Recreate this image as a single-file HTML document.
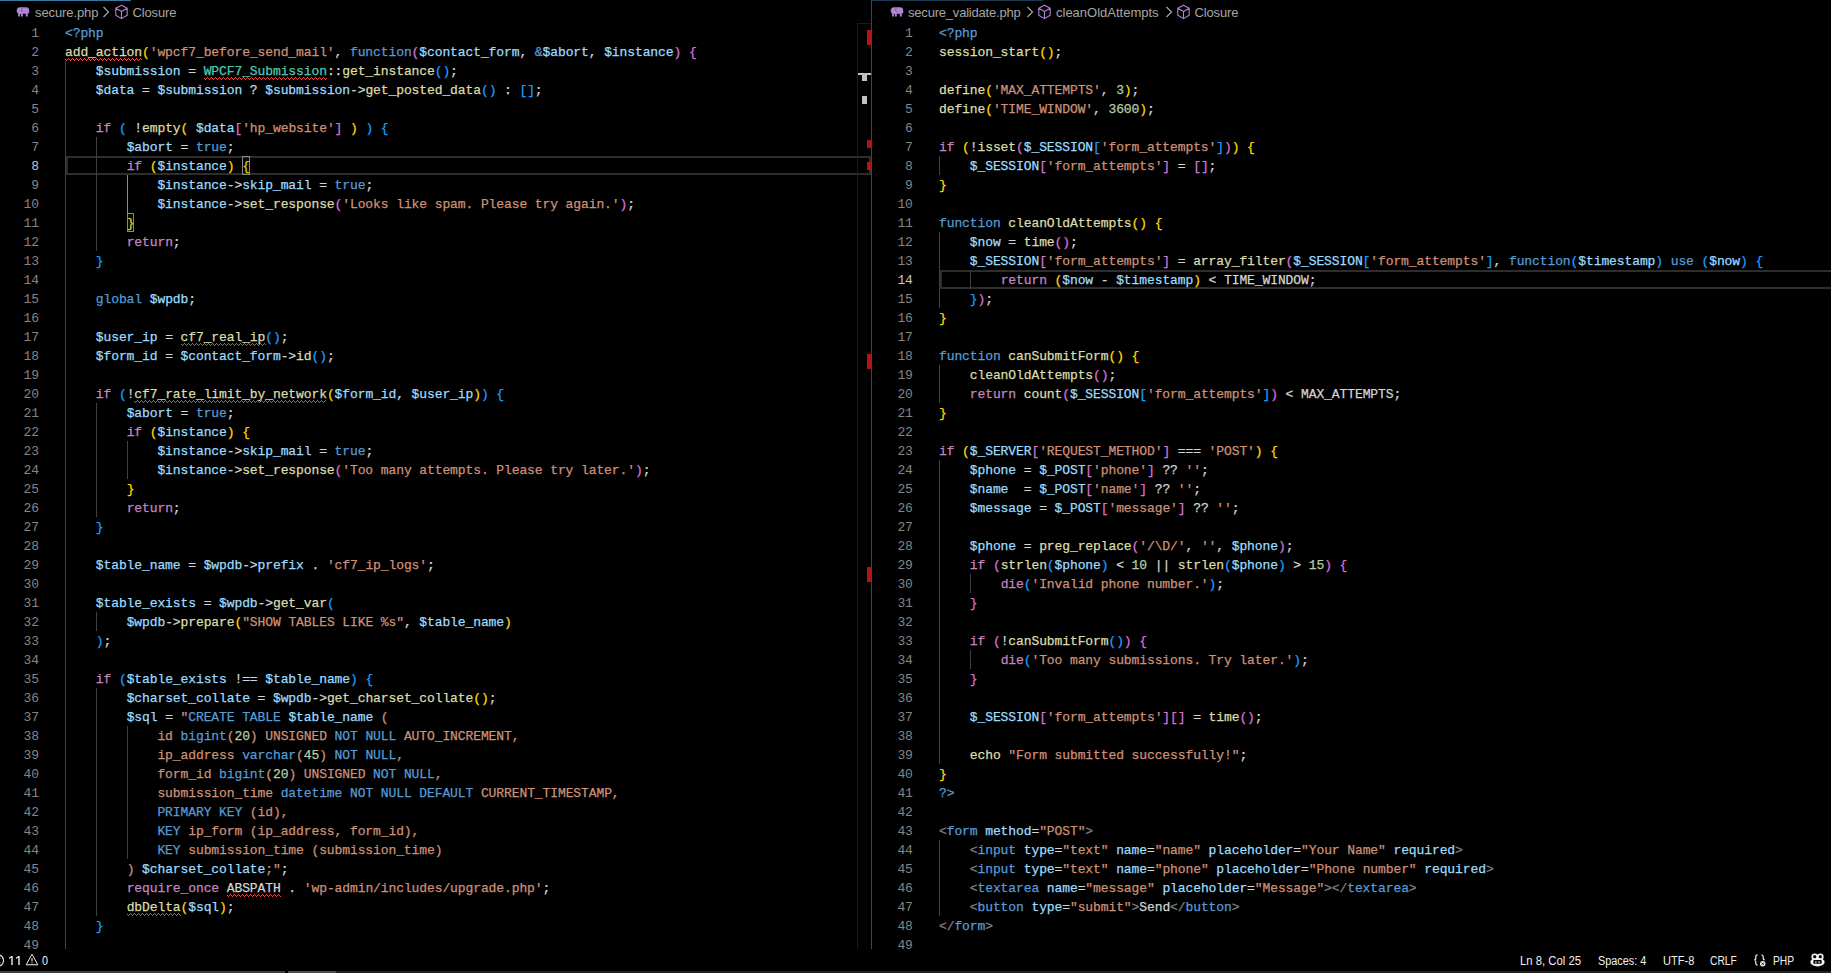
<!DOCTYPE html>
<html><head><meta charset="utf-8"><title>secure.php</title>
<style>
*{box-sizing:border-box;margin:0;padding:0}
html,body{width:1831px;height:973px;overflow:hidden;background:#000}
body{position:relative;font-family:"Liberation Sans",sans-serif}
.pane{position:absolute;top:0;height:949px;overflow:hidden;background:#000}
#pl{left:0;width:871px}
#pr{left:872px;width:959px}
#div{position:absolute;left:871px;top:0;width:1px;height:949px;background:#444}
.tabline{position:absolute;top:0;left:0;height:1px;background:#347ba4}
.bc{position:absolute;top:0;left:0;height:23px;font-size:13px;color:#a6a6a6;white-space:nowrap}
.bc span{position:absolute;top:5px;line-height:16px}
.bc svg{position:absolute}
.ln{position:absolute;left:0;height:19px;line-height:19px;text-align:right;font-family:"Liberation Mono",monospace;font-size:13px;letter-spacing:-0.1px;color:#858585;padding-top:1px}
.ln.la{color:#c6c6c6}
.code{position:absolute;height:19px;line-height:19px;white-space:pre;font-family:"Liberation Mono",monospace;font-size:13px;letter-spacing:-0.1px;color:#d4d4d4;padding-top:1px;-webkit-text-stroke:0.25px}
.code span{display:inline-block;height:19px;line-height:19px;vertical-align:top;position:relative}
.b{color:#569cd6}.y{color:#dcdcaa}.s{color:#ce9178}.v{color:#9cdcfe}.p{color:#c586c0}
.t{color:#4ec9b0}.n{color:#b5cea8}.w{color:#d4d4d4}.g{color:#808080}.r{color:#ce9178}
.k1{color:#ffd700}.k2{color:#da70d6}.k3{color:#179fff}
.sqs{position:absolute;left:0;bottom:1px}
.bm::after{content:"";box-sizing:border-box;position:absolute;left:0;top:-1px;width:100%;height:19px;border:1px solid #888;background:rgba(0,100,0,0.1)}
.cl{position:absolute;height:19px;border:2px solid #2d2d2d}
.ig{position:absolute;width:1px;background:#404040}
.ig.act{background:#8a8a8a}
#ruler{position:absolute;left:857px;top:23px;width:14px;height:926px;border-left:1px solid #1c1c1c;border-top:1px solid #1c1c1c}
.rm{position:absolute;background:#b31616;left:867px;width:4px}
.gm{position:absolute;background:#c0c0c0;left:862px;width:5px}
#status{position:absolute;left:0;top:950px;width:1831px;height:21px;font-size:12px;color:#f0f0f0;white-space:nowrap}
#status span{position:absolute;top:3px;line-height:16px;transform-origin:0 50%}
#status svg{position:absolute}
</style></head><body>
<div class="pane" id="pl">
<div class="tabline" style="width:131px"></div>
<div class="bc">
<svg style="left:16px;top:6px" width="14" height="11" viewBox="0 0 14 11"><path d="M3.800 1.300 H10.200 C12 1.300 13.200 2.500 13.200 4.300 V7.300 H11.800 V10.500 H9.800 V7.800 H6.800 V10.500 H4.900 V8 H3.900 V10.500 H2.100 V7.600 C1.200 7 .700 6 .700 4.600 C.700 2.600 2 1.300 3.800 1.300 Z" fill="#b084d8"/><path d="M6.100 2.200 Q4.700 4.300 6.700 6" fill="none" stroke="#6b4a96" stroke-width=".8"/></svg>
<span style="left:35px;letter-spacing:-0.1px">secure.php</span>
<svg style="left:102px;top:6px" width="8" height="12" viewBox="0 0 8 12"><path d="M1.500 1 L6.500 6 L1.500 11" fill="none" stroke="#a6a6a6" stroke-width="1.200"/></svg>
<svg style="left:114px;top:4px" width="15" height="16" viewBox="0 0 15 16"><path d="M7.500 1.200 L13.200 4.300 V11.200 L7.500 14.600 L1.800 11.200 V4.300 Z M1.800 4.300 L7.500 7.600 L13.200 4.300 M7.500 7.600 V14.600" fill="none" stroke="#b180d7" stroke-width="1.100" stroke-linejoin="round"/></svg>
<span style="left:132.500px;letter-spacing:-0.15px">Closure</span>
</div>
<div class="cl" style="left:66px;top:156px;width:805px"></div>
<div class="ig" style="left:65px;top:61px;height:893px"></div>
<div class="ig" style="left:96px;top:137px;height:114px"></div>
<div class="ig" style="left:96px;top:403px;height:114px"></div>
<div class="ig" style="left:96px;top:612px;height:19px"></div>
<div class="ig" style="left:96px;top:688px;height:228px"></div>
<div class="ig" style="left:127px;top:441px;height:38px"></div>
<div class="ig" style="left:127px;top:726px;height:133px"></div>
<div class="ig act" style="left:127px;top:175px;height:38px"></div>
<div class="ln" style="top:23px;width:39px">1</div>
<div class="code" style="top:23px;left:65px"><span class="b">&lt;?php</span></div>
<div class="ln" style="top:42px;width:39px">2</div>
<div class="code" style="top:42px;left:65px"><span class="y sq">add_action<svg class="sqs" width="77" height="3" viewBox="0 0 77 3" shape-rendering="crispEdges"><path d="M0 1h1v1h-1zM1 2h1v1h-1zM2 1h1v1h-1zM3 0h1v1h-1zM4 1h1v1h-1zM5 2h1v1h-1zM6 1h1v1h-1zM7 0h1v1h-1zM8 1h1v1h-1zM9 2h1v1h-1zM10 1h1v1h-1zM11 0h1v1h-1zM12 1h1v1h-1zM13 2h1v1h-1zM14 1h1v1h-1zM15 0h1v1h-1zM16 1h1v1h-1zM17 2h1v1h-1zM18 1h1v1h-1zM19 0h1v1h-1zM20 1h1v1h-1zM21 2h1v1h-1zM22 1h1v1h-1zM23 0h1v1h-1zM24 1h1v1h-1zM25 2h1v1h-1zM26 1h1v1h-1zM27 0h1v1h-1zM28 1h1v1h-1zM29 2h1v1h-1zM30 1h1v1h-1zM31 0h1v1h-1zM32 1h1v1h-1zM33 2h1v1h-1zM34 1h1v1h-1zM35 0h1v1h-1zM36 1h1v1h-1zM37 2h1v1h-1zM38 1h1v1h-1zM39 0h1v1h-1zM40 1h1v1h-1zM41 2h1v1h-1zM42 1h1v1h-1zM43 0h1v1h-1zM44 1h1v1h-1zM45 2h1v1h-1zM46 1h1v1h-1zM47 0h1v1h-1zM48 1h1v1h-1zM49 2h1v1h-1zM50 1h1v1h-1zM51 0h1v1h-1zM52 1h1v1h-1zM53 2h1v1h-1zM54 1h1v1h-1zM55 0h1v1h-1zM56 1h1v1h-1zM57 2h1v1h-1zM58 1h1v1h-1zM59 0h1v1h-1zM60 1h1v1h-1zM61 2h1v1h-1zM62 1h1v1h-1zM63 0h1v1h-1zM64 1h1v1h-1zM65 2h1v1h-1zM66 1h1v1h-1zM67 0h1v1h-1zM68 1h1v1h-1zM69 2h1v1h-1zM70 1h1v1h-1zM71 0h1v1h-1zM72 1h1v1h-1zM73 2h1v1h-1zM74 1h1v1h-1zM75 0h1v1h-1zM76 1h1v1h-1z" fill="#e64c4c"/></svg></span><span class="k1">(</span><span class="s">'wpcf7_before_send_mail'</span>, <span class="b">function</span><span class="k2">(</span><span class="v">$contact_form</span>, <span class="b">&amp;</span><span class="v">$abort</span>, <span class="v">$instance</span><span class="k2">)</span> <span class="k2">{</span></div>
<div class="ln" style="top:61px;width:39px">3</div>
<div class="code" style="top:61px;left:65px">    <span class="v">$submission</span> = <span class="t sq">WPCF7_Submission<svg class="sqs" width="123" height="3" viewBox="0 0 123 3" shape-rendering="crispEdges"><path d="M0 1h1v1h-1zM1 2h1v1h-1zM2 1h1v1h-1zM3 0h1v1h-1zM4 1h1v1h-1zM5 2h1v1h-1zM6 1h1v1h-1zM7 0h1v1h-1zM8 1h1v1h-1zM9 2h1v1h-1zM10 1h1v1h-1zM11 0h1v1h-1zM12 1h1v1h-1zM13 2h1v1h-1zM14 1h1v1h-1zM15 0h1v1h-1zM16 1h1v1h-1zM17 2h1v1h-1zM18 1h1v1h-1zM19 0h1v1h-1zM20 1h1v1h-1zM21 2h1v1h-1zM22 1h1v1h-1zM23 0h1v1h-1zM24 1h1v1h-1zM25 2h1v1h-1zM26 1h1v1h-1zM27 0h1v1h-1zM28 1h1v1h-1zM29 2h1v1h-1zM30 1h1v1h-1zM31 0h1v1h-1zM32 1h1v1h-1zM33 2h1v1h-1zM34 1h1v1h-1zM35 0h1v1h-1zM36 1h1v1h-1zM37 2h1v1h-1zM38 1h1v1h-1zM39 0h1v1h-1zM40 1h1v1h-1zM41 2h1v1h-1zM42 1h1v1h-1zM43 0h1v1h-1zM44 1h1v1h-1zM45 2h1v1h-1zM46 1h1v1h-1zM47 0h1v1h-1zM48 1h1v1h-1zM49 2h1v1h-1zM50 1h1v1h-1zM51 0h1v1h-1zM52 1h1v1h-1zM53 2h1v1h-1zM54 1h1v1h-1zM55 0h1v1h-1zM56 1h1v1h-1zM57 2h1v1h-1zM58 1h1v1h-1zM59 0h1v1h-1zM60 1h1v1h-1zM61 2h1v1h-1zM62 1h1v1h-1zM63 0h1v1h-1zM64 1h1v1h-1zM65 2h1v1h-1zM66 1h1v1h-1zM67 0h1v1h-1zM68 1h1v1h-1zM69 2h1v1h-1zM70 1h1v1h-1zM71 0h1v1h-1zM72 1h1v1h-1zM73 2h1v1h-1zM74 1h1v1h-1zM75 0h1v1h-1zM76 1h1v1h-1zM77 2h1v1h-1zM78 1h1v1h-1zM79 0h1v1h-1zM80 1h1v1h-1zM81 2h1v1h-1zM82 1h1v1h-1zM83 0h1v1h-1zM84 1h1v1h-1zM85 2h1v1h-1zM86 1h1v1h-1zM87 0h1v1h-1zM88 1h1v1h-1zM89 2h1v1h-1zM90 1h1v1h-1zM91 0h1v1h-1zM92 1h1v1h-1zM93 2h1v1h-1zM94 1h1v1h-1zM95 0h1v1h-1zM96 1h1v1h-1zM97 2h1v1h-1zM98 1h1v1h-1zM99 0h1v1h-1zM100 1h1v1h-1zM101 2h1v1h-1zM102 1h1v1h-1zM103 0h1v1h-1zM104 1h1v1h-1zM105 2h1v1h-1zM106 1h1v1h-1zM107 0h1v1h-1zM108 1h1v1h-1zM109 2h1v1h-1zM110 1h1v1h-1zM111 0h1v1h-1zM112 1h1v1h-1zM113 2h1v1h-1zM114 1h1v1h-1zM115 0h1v1h-1zM116 1h1v1h-1zM117 2h1v1h-1zM118 1h1v1h-1zM119 0h1v1h-1zM120 1h1v1h-1zM121 2h1v1h-1zM122 1h1v1h-1z" fill="#e64c4c"/></svg></span>::<span class="y">get_instance</span><span class="k3">(</span><span class="k3">)</span>;</div>
<div class="ln" style="top:80px;width:39px">4</div>
<div class="code" style="top:80px;left:65px">    <span class="v">$data</span> = <span class="v">$submission</span> ? <span class="v">$submission</span>-&gt;<span class="y">get_posted_data</span><span class="k3">(</span><span class="k3">)</span> : <span class="k3">[</span><span class="k3">]</span>;</div>
<div class="ln" style="top:99px;width:39px">5</div>
<div class="ln" style="top:118px;width:39px">6</div>
<div class="code" style="top:118px;left:65px">    <span class="p">if</span> <span class="k3">(</span> !<span class="y">empty</span><span class="k1">(</span> <span class="v">$data</span><span class="k2">[</span><span class="s">'hp_website'</span><span class="k2">]</span> <span class="k1">)</span> <span class="k3">)</span> <span class="k3">{</span></div>
<div class="ln" style="top:137px;width:39px">7</div>
<div class="code" style="top:137px;left:65px">        <span class="v">$abort</span> = <span class="b">true</span>;</div>
<div class="ln la" style="top:156px;width:39px">8</div>
<div class="code" style="top:156px;left:65px">        <span class="p">if</span> <span class="k1">(</span><span class="v">$instance</span><span class="k1">)</span> <span class="k1 bm">{</span></div>
<div class="ln" style="top:175px;width:39px">9</div>
<div class="code" style="top:175px;left:65px">            <span class="v">$instance</span>-&gt;<span class="v">skip_mail</span> = <span class="b">true</span>;</div>
<div class="ln" style="top:194px;width:39px">10</div>
<div class="code" style="top:194px;left:65px">            <span class="v">$instance</span>-&gt;<span class="y">set_response</span><span class="k2">(</span><span class="s">'Looks like spam. Please try again.'</span><span class="k2">)</span>;</div>
<div class="ln" style="top:213px;width:39px">11</div>
<div class="code" style="top:213px;left:65px">        <span class="k1 bm">}</span></div>
<div class="ln" style="top:232px;width:39px">12</div>
<div class="code" style="top:232px;left:65px">        <span class="p">return</span>;</div>
<div class="ln" style="top:251px;width:39px">13</div>
<div class="code" style="top:251px;left:65px">    <span class="k3">}</span></div>
<div class="ln" style="top:270px;width:39px">14</div>
<div class="ln" style="top:289px;width:39px">15</div>
<div class="code" style="top:289px;left:65px">    <span class="b">global</span> <span class="v">$wpdb</span>;</div>
<div class="ln" style="top:308px;width:39px">16</div>
<div class="ln" style="top:327px;width:39px">17</div>
<div class="code" style="top:327px;left:65px">    <span class="v">$user_ip</span> = <span class="y sq">cf7_real_ip<svg class="sqs" width="85" height="3" viewBox="0 0 85 3" shape-rendering="crispEdges"><path d="M0 1h1v1h-1zM1 2h1v1h-1zM2 1h1v1h-1zM3 0h1v1h-1zM4 1h1v1h-1zM5 2h1v1h-1zM6 1h1v1h-1zM7 0h1v1h-1zM8 1h1v1h-1zM9 2h1v1h-1zM10 1h1v1h-1zM11 0h1v1h-1zM12 1h1v1h-1zM13 2h1v1h-1zM14 1h1v1h-1zM15 0h1v1h-1zM16 1h1v1h-1zM17 2h1v1h-1zM18 1h1v1h-1zM19 0h1v1h-1zM20 1h1v1h-1zM21 2h1v1h-1zM22 1h1v1h-1zM23 0h1v1h-1zM24 1h1v1h-1zM25 2h1v1h-1zM26 1h1v1h-1zM27 0h1v1h-1zM28 1h1v1h-1zM29 2h1v1h-1zM30 1h1v1h-1zM31 0h1v1h-1zM32 1h1v1h-1zM33 2h1v1h-1zM34 1h1v1h-1zM35 0h1v1h-1zM36 1h1v1h-1zM37 2h1v1h-1zM38 1h1v1h-1zM39 0h1v1h-1zM40 1h1v1h-1zM41 2h1v1h-1zM42 1h1v1h-1zM43 0h1v1h-1zM44 1h1v1h-1zM45 2h1v1h-1zM46 1h1v1h-1zM47 0h1v1h-1zM48 1h1v1h-1zM49 2h1v1h-1zM50 1h1v1h-1zM51 0h1v1h-1zM52 1h1v1h-1zM53 2h1v1h-1zM54 1h1v1h-1zM55 0h1v1h-1zM56 1h1v1h-1zM57 2h1v1h-1zM58 1h1v1h-1zM59 0h1v1h-1zM60 1h1v1h-1zM61 2h1v1h-1zM62 1h1v1h-1zM63 0h1v1h-1zM64 1h1v1h-1zM65 2h1v1h-1zM66 1h1v1h-1zM67 0h1v1h-1zM68 1h1v1h-1zM69 2h1v1h-1zM70 1h1v1h-1zM71 0h1v1h-1zM72 1h1v1h-1zM73 2h1v1h-1zM74 1h1v1h-1zM75 0h1v1h-1zM76 1h1v1h-1zM77 2h1v1h-1zM78 1h1v1h-1zM79 0h1v1h-1zM80 1h1v1h-1zM81 2h1v1h-1zM82 1h1v1h-1zM83 0h1v1h-1zM84 1h1v1h-1z" fill="#e64c4c"/></svg></span><span class="k3">(</span><span class="k3">)</span>;</div>
<div class="ln" style="top:346px;width:39px">18</div>
<div class="code" style="top:346px;left:65px">    <span class="v">$form_id</span> = <span class="v">$contact_form</span>-&gt;<span class="y">id</span><span class="k3">(</span><span class="k3">)</span>;</div>
<div class="ln" style="top:365px;width:39px">19</div>
<div class="ln" style="top:384px;width:39px">20</div>
<div class="code" style="top:384px;left:65px">    <span class="p">if</span> <span class="k3">(</span>!<span class="y sq">cf7_rate_limit_by_network<svg class="sqs" width="192" height="3" viewBox="0 0 192 3" shape-rendering="crispEdges"><path d="M0 1h1v1h-1zM1 2h1v1h-1zM2 1h1v1h-1zM3 0h1v1h-1zM4 1h1v1h-1zM5 2h1v1h-1zM6 1h1v1h-1zM7 0h1v1h-1zM8 1h1v1h-1zM9 2h1v1h-1zM10 1h1v1h-1zM11 0h1v1h-1zM12 1h1v1h-1zM13 2h1v1h-1zM14 1h1v1h-1zM15 0h1v1h-1zM16 1h1v1h-1zM17 2h1v1h-1zM18 1h1v1h-1zM19 0h1v1h-1zM20 1h1v1h-1zM21 2h1v1h-1zM22 1h1v1h-1zM23 0h1v1h-1zM24 1h1v1h-1zM25 2h1v1h-1zM26 1h1v1h-1zM27 0h1v1h-1zM28 1h1v1h-1zM29 2h1v1h-1zM30 1h1v1h-1zM31 0h1v1h-1zM32 1h1v1h-1zM33 2h1v1h-1zM34 1h1v1h-1zM35 0h1v1h-1zM36 1h1v1h-1zM37 2h1v1h-1zM38 1h1v1h-1zM39 0h1v1h-1zM40 1h1v1h-1zM41 2h1v1h-1zM42 1h1v1h-1zM43 0h1v1h-1zM44 1h1v1h-1zM45 2h1v1h-1zM46 1h1v1h-1zM47 0h1v1h-1zM48 1h1v1h-1zM49 2h1v1h-1zM50 1h1v1h-1zM51 0h1v1h-1zM52 1h1v1h-1zM53 2h1v1h-1zM54 1h1v1h-1zM55 0h1v1h-1zM56 1h1v1h-1zM57 2h1v1h-1zM58 1h1v1h-1zM59 0h1v1h-1zM60 1h1v1h-1zM61 2h1v1h-1zM62 1h1v1h-1zM63 0h1v1h-1zM64 1h1v1h-1zM65 2h1v1h-1zM66 1h1v1h-1zM67 0h1v1h-1zM68 1h1v1h-1zM69 2h1v1h-1zM70 1h1v1h-1zM71 0h1v1h-1zM72 1h1v1h-1zM73 2h1v1h-1zM74 1h1v1h-1zM75 0h1v1h-1zM76 1h1v1h-1zM77 2h1v1h-1zM78 1h1v1h-1zM79 0h1v1h-1zM80 1h1v1h-1zM81 2h1v1h-1zM82 1h1v1h-1zM83 0h1v1h-1zM84 1h1v1h-1zM85 2h1v1h-1zM86 1h1v1h-1zM87 0h1v1h-1zM88 1h1v1h-1zM89 2h1v1h-1zM90 1h1v1h-1zM91 0h1v1h-1zM92 1h1v1h-1zM93 2h1v1h-1zM94 1h1v1h-1zM95 0h1v1h-1zM96 1h1v1h-1zM97 2h1v1h-1zM98 1h1v1h-1zM99 0h1v1h-1zM100 1h1v1h-1zM101 2h1v1h-1zM102 1h1v1h-1zM103 0h1v1h-1zM104 1h1v1h-1zM105 2h1v1h-1zM106 1h1v1h-1zM107 0h1v1h-1zM108 1h1v1h-1zM109 2h1v1h-1zM110 1h1v1h-1zM111 0h1v1h-1zM112 1h1v1h-1zM113 2h1v1h-1zM114 1h1v1h-1zM115 0h1v1h-1zM116 1h1v1h-1zM117 2h1v1h-1zM118 1h1v1h-1zM119 0h1v1h-1zM120 1h1v1h-1zM121 2h1v1h-1zM122 1h1v1h-1zM123 0h1v1h-1zM124 1h1v1h-1zM125 2h1v1h-1zM126 1h1v1h-1zM127 0h1v1h-1zM128 1h1v1h-1zM129 2h1v1h-1zM130 1h1v1h-1zM131 0h1v1h-1zM132 1h1v1h-1zM133 2h1v1h-1zM134 1h1v1h-1zM135 0h1v1h-1zM136 1h1v1h-1zM137 2h1v1h-1zM138 1h1v1h-1zM139 0h1v1h-1zM140 1h1v1h-1zM141 2h1v1h-1zM142 1h1v1h-1zM143 0h1v1h-1zM144 1h1v1h-1zM145 2h1v1h-1zM146 1h1v1h-1zM147 0h1v1h-1zM148 1h1v1h-1zM149 2h1v1h-1zM150 1h1v1h-1zM151 0h1v1h-1zM152 1h1v1h-1zM153 2h1v1h-1zM154 1h1v1h-1zM155 0h1v1h-1zM156 1h1v1h-1zM157 2h1v1h-1zM158 1h1v1h-1zM159 0h1v1h-1zM160 1h1v1h-1zM161 2h1v1h-1zM162 1h1v1h-1zM163 0h1v1h-1zM164 1h1v1h-1zM165 2h1v1h-1zM166 1h1v1h-1zM167 0h1v1h-1zM168 1h1v1h-1zM169 2h1v1h-1zM170 1h1v1h-1zM171 0h1v1h-1zM172 1h1v1h-1zM173 2h1v1h-1zM174 1h1v1h-1zM175 0h1v1h-1zM176 1h1v1h-1zM177 2h1v1h-1zM178 1h1v1h-1zM179 0h1v1h-1zM180 1h1v1h-1zM181 2h1v1h-1zM182 1h1v1h-1zM183 0h1v1h-1zM184 1h1v1h-1zM185 2h1v1h-1zM186 1h1v1h-1zM187 0h1v1h-1zM188 1h1v1h-1zM189 2h1v1h-1zM190 1h1v1h-1zM191 0h1v1h-1z" fill="#e64c4c"/></svg></span><span class="k1">(</span><span class="v">$form_id</span>, <span class="v">$user_ip</span><span class="k1">)</span><span class="k3">)</span> <span class="k3">{</span></div>
<div class="ln" style="top:403px;width:39px">21</div>
<div class="code" style="top:403px;left:65px">        <span class="v">$abort</span> = <span class="b">true</span>;</div>
<div class="ln" style="top:422px;width:39px">22</div>
<div class="code" style="top:422px;left:65px">        <span class="p">if</span> <span class="k1">(</span><span class="v">$instance</span><span class="k1">)</span> <span class="k1">{</span></div>
<div class="ln" style="top:441px;width:39px">23</div>
<div class="code" style="top:441px;left:65px">            <span class="v">$instance</span>-&gt;<span class="v">skip_mail</span> = <span class="b">true</span>;</div>
<div class="ln" style="top:460px;width:39px">24</div>
<div class="code" style="top:460px;left:65px">            <span class="v">$instance</span>-&gt;<span class="y">set_response</span><span class="k2">(</span><span class="s">'Too many attempts. Please try later.'</span><span class="k2">)</span>;</div>
<div class="ln" style="top:479px;width:39px">25</div>
<div class="code" style="top:479px;left:65px">        <span class="k1">}</span></div>
<div class="ln" style="top:498px;width:39px">26</div>
<div class="code" style="top:498px;left:65px">        <span class="p">return</span>;</div>
<div class="ln" style="top:517px;width:39px">27</div>
<div class="code" style="top:517px;left:65px">    <span class="k3">}</span></div>
<div class="ln" style="top:536px;width:39px">28</div>
<div class="ln" style="top:555px;width:39px">29</div>
<div class="code" style="top:555px;left:65px">    <span class="v">$table_name</span> = <span class="v">$wpdb</span>-&gt;<span class="v">prefix</span> . <span class="s">'cf7_ip_logs'</span>;</div>
<div class="ln" style="top:574px;width:39px">30</div>
<div class="ln" style="top:593px;width:39px">31</div>
<div class="code" style="top:593px;left:65px">    <span class="v">$table_exists</span> = <span class="v">$wpdb</span>-&gt;<span class="y">get_var</span><span class="k3">(</span></div>
<div class="ln" style="top:612px;width:39px">32</div>
<div class="code" style="top:612px;left:65px">        <span class="v">$wpdb</span>-&gt;<span class="y">prepare</span><span class="k1">(</span><span class="s">"SHOW TABLES LIKE %s"</span>, <span class="v">$table_name</span><span class="k1">)</span></div>
<div class="ln" style="top:631px;width:39px">33</div>
<div class="code" style="top:631px;left:65px">    <span class="k3">)</span>;</div>
<div class="ln" style="top:650px;width:39px">34</div>
<div class="ln" style="top:669px;width:39px">35</div>
<div class="code" style="top:669px;left:65px">    <span class="p">if</span> <span class="k3">(</span><span class="v">$table_exists</span> !== <span class="v">$table_name</span><span class="k3">)</span> <span class="k3">{</span></div>
<div class="ln" style="top:688px;width:39px">36</div>
<div class="code" style="top:688px;left:65px">        <span class="v">$charset_collate</span> = <span class="v">$wpdb</span>-&gt;<span class="y">get_charset_collate</span><span class="k1">(</span><span class="k1">)</span>;</div>
<div class="ln" style="top:707px;width:39px">37</div>
<div class="code" style="top:707px;left:65px">        <span class="v">$sql</span> = <span class="s">"</span><span class="b">CREATE TABLE</span><span class="s"> </span><span class="v">$table_name</span><span class="s"> (</span></div>
<div class="ln" style="top:726px;width:39px">38</div>
<div class="code" style="top:726px;left:65px">            <span class="s">id </span><span class="b">bigint</span><span class="s">(</span><span class="n">20</span><span class="s">) UNSIGNED </span><span class="b">NOT NULL</span><span class="s"> AUTO_INCREMENT,</span></div>
<div class="ln" style="top:745px;width:39px">39</div>
<div class="code" style="top:745px;left:65px">            <span class="s">ip_address </span><span class="b">varchar</span><span class="s">(</span><span class="n">45</span><span class="s">) </span><span class="b">NOT NULL</span><span class="s">,</span></div>
<div class="ln" style="top:764px;width:39px">40</div>
<div class="code" style="top:764px;left:65px">            <span class="s">form_id </span><span class="b">bigint</span><span class="s">(</span><span class="n">20</span><span class="s">) UNSIGNED </span><span class="b">NOT NULL</span><span class="s">,</span></div>
<div class="ln" style="top:783px;width:39px">41</div>
<div class="code" style="top:783px;left:65px">            <span class="s">submission_time </span><span class="b">datetime</span><span class="s"> </span><span class="b">NOT NULL DEFAULT</span><span class="s"> CURRENT_TIMESTAMP,</span></div>
<div class="ln" style="top:802px;width:39px">42</div>
<div class="code" style="top:802px;left:65px">            <span class="b">PRIMARY KEY</span><span class="s"> (id),</span></div>
<div class="ln" style="top:821px;width:39px">43</div>
<div class="code" style="top:821px;left:65px">            <span class="b">KEY</span><span class="s"> ip_form (ip_address, form_id),</span></div>
<div class="ln" style="top:840px;width:39px">44</div>
<div class="code" style="top:840px;left:65px">            <span class="b">KEY</span><span class="s"> submission_time (submission_time)</span></div>
<div class="ln" style="top:859px;width:39px">45</div>
<div class="code" style="top:859px;left:65px">        <span class="s">) </span><span class="v">$charset_collate</span><span class="s">;"</span>;</div>
<div class="ln" style="top:878px;width:39px">46</div>
<div class="code" style="top:878px;left:65px">        <span class="p">require_once</span> <span class="w sq">ABSPATH<svg class="sqs" width="54" height="3" viewBox="0 0 54 3" shape-rendering="crispEdges"><path d="M0 1h1v1h-1zM1 2h1v1h-1zM2 1h1v1h-1zM3 0h1v1h-1zM4 1h1v1h-1zM5 2h1v1h-1zM6 1h1v1h-1zM7 0h1v1h-1zM8 1h1v1h-1zM9 2h1v1h-1zM10 1h1v1h-1zM11 0h1v1h-1zM12 1h1v1h-1zM13 2h1v1h-1zM14 1h1v1h-1zM15 0h1v1h-1zM16 1h1v1h-1zM17 2h1v1h-1zM18 1h1v1h-1zM19 0h1v1h-1zM20 1h1v1h-1zM21 2h1v1h-1zM22 1h1v1h-1zM23 0h1v1h-1zM24 1h1v1h-1zM25 2h1v1h-1zM26 1h1v1h-1zM27 0h1v1h-1zM28 1h1v1h-1zM29 2h1v1h-1zM30 1h1v1h-1zM31 0h1v1h-1zM32 1h1v1h-1zM33 2h1v1h-1zM34 1h1v1h-1zM35 0h1v1h-1zM36 1h1v1h-1zM37 2h1v1h-1zM38 1h1v1h-1zM39 0h1v1h-1zM40 1h1v1h-1zM41 2h1v1h-1zM42 1h1v1h-1zM43 0h1v1h-1zM44 1h1v1h-1zM45 2h1v1h-1zM46 1h1v1h-1zM47 0h1v1h-1zM48 1h1v1h-1zM49 2h1v1h-1zM50 1h1v1h-1zM51 0h1v1h-1zM52 1h1v1h-1zM53 2h1v1h-1z" fill="#e64c4c"/></svg></span> . <span class="s">'wp-admin/includes/upgrade.php'</span>;</div>
<div class="ln" style="top:897px;width:39px">47</div>
<div class="code" style="top:897px;left:65px">        <span class="y sq">dbDelta<svg class="sqs" width="54" height="3" viewBox="0 0 54 3" shape-rendering="crispEdges"><path d="M0 1h1v1h-1zM1 2h1v1h-1zM2 1h1v1h-1zM3 0h1v1h-1zM4 1h1v1h-1zM5 2h1v1h-1zM6 1h1v1h-1zM7 0h1v1h-1zM8 1h1v1h-1zM9 2h1v1h-1zM10 1h1v1h-1zM11 0h1v1h-1zM12 1h1v1h-1zM13 2h1v1h-1zM14 1h1v1h-1zM15 0h1v1h-1zM16 1h1v1h-1zM17 2h1v1h-1zM18 1h1v1h-1zM19 0h1v1h-1zM20 1h1v1h-1zM21 2h1v1h-1zM22 1h1v1h-1zM23 0h1v1h-1zM24 1h1v1h-1zM25 2h1v1h-1zM26 1h1v1h-1zM27 0h1v1h-1zM28 1h1v1h-1zM29 2h1v1h-1zM30 1h1v1h-1zM31 0h1v1h-1zM32 1h1v1h-1zM33 2h1v1h-1zM34 1h1v1h-1zM35 0h1v1h-1zM36 1h1v1h-1zM37 2h1v1h-1zM38 1h1v1h-1zM39 0h1v1h-1zM40 1h1v1h-1zM41 2h1v1h-1zM42 1h1v1h-1zM43 0h1v1h-1zM44 1h1v1h-1zM45 2h1v1h-1zM46 1h1v1h-1zM47 0h1v1h-1zM48 1h1v1h-1zM49 2h1v1h-1zM50 1h1v1h-1zM51 0h1v1h-1zM52 1h1v1h-1zM53 2h1v1h-1z" fill="#e64c4c"/></svg></span><span class="k1">(</span><span class="v">$sql</span><span class="k1">)</span>;</div>
<div class="ln" style="top:916px;width:39px">48</div>
<div class="code" style="top:916px;left:65px">    <span class="k3">}</span></div>
<div class="ln" style="top:935px;width:39px">49</div>
</div>
<div id="ruler"></div>
<div class="rm" style="top:30px;height:15px"></div>
<div class="rm" style="top:140px;height:8px"></div>
<div class="rm" style="top:162px;height:8px"></div>
<div class="rm" style="top:354px;height:15px"></div>
<div class="rm" style="top:567px;height:15px"></div>
<div style="position:absolute;left:858px;top:73px;width:13px;height:2px;background:#c0c0c0"></div>
<div class="gm" style="top:75px;height:6px"></div>
<div class="gm" style="top:96px;height:8px"></div>
<div id="div"></div>
<div class="pane" id="pr">
<div class="tabline" style="width:171px;background:#1c3a50"></div>
<div class="bc">
<svg style="left:18px;top:6px" width="14" height="11" viewBox="0 0 14 11"><path d="M3.800 1.300 H10.200 C12 1.300 13.200 2.500 13.200 4.300 V7.300 H11.800 V10.500 H9.800 V7.800 H6.800 V10.500 H4.900 V8 H3.900 V10.500 H2.100 V7.600 C1.200 7 .700 6 .700 4.600 C.700 2.600 2 1.300 3.800 1.300 Z" fill="#b084d8"/><path d="M6.100 2.200 Q4.700 4.300 6.700 6" fill="none" stroke="#6b4a96" stroke-width=".8"/></svg>
<span style="left:36px;letter-spacing:-0.2px">secure_validate.php</span>
<svg style="left:154px;top:6px" width="8" height="12" viewBox="0 0 8 12"><path d="M1.500 1 L6.500 6 L1.500 11" fill="none" stroke="#a6a6a6" stroke-width="1.200"/></svg>
<svg style="left:165px;top:4px" width="15" height="16" viewBox="0 0 15 16"><path d="M7.500 1.200 L13.200 4.300 V11.200 L7.500 14.600 L1.800 11.200 V4.300 Z M1.800 4.300 L7.500 7.600 L13.200 4.300 M7.500 7.600 V14.600" fill="none" stroke="#b180d7" stroke-width="1.100" stroke-linejoin="round"/></svg>
<span style="left:184px">cleanOldAttempts</span>
<svg style="left:293px;top:6px" width="8" height="12" viewBox="0 0 8 12"><path d="M1.500 1 L6.500 6 L1.500 11" fill="none" stroke="#a6a6a6" stroke-width="1.200"/></svg>
<svg style="left:304px;top:4px" width="15" height="16" viewBox="0 0 15 16"><path d="M7.500 1.200 L13.200 4.300 V11.200 L7.500 14.600 L1.800 11.200 V4.300 Z M1.800 4.300 L7.500 7.600 L13.200 4.300 M7.500 7.600 V14.600" fill="none" stroke="#b180d7" stroke-width="1.100" stroke-linejoin="round"/></svg>
<span style="left:322.500px;letter-spacing:-0.15px">Closure</span>
</div>
<div class="cl" style="left:68px;top:270px;width:911px"></div>
<div class="ig" style="left:67px;top:156px;height:19px"></div>
<div class="ig" style="left:67px;top:232px;height:76px"></div>
<div class="ig" style="left:67px;top:365px;height:38px"></div>
<div class="ig" style="left:67px;top:460px;height:304px"></div>
<div class="ig" style="left:67px;top:840px;height:76px"></div>
<div class="ig" style="left:98px;top:270px;height:19px"></div>
<div class="ig" style="left:98px;top:574px;height:19px"></div>
<div class="ig" style="left:98px;top:650px;height:19px"></div>
<div class="ln" style="top:23px;width:40.8px">1</div>
<div class="code" style="top:23px;left:67px"><span class="b">&lt;?php</span></div>
<div class="ln" style="top:42px;width:40.8px">2</div>
<div class="code" style="top:42px;left:67px"><span class="y">session_start</span><span class="k1">(</span><span class="k1">)</span>;</div>
<div class="ln" style="top:61px;width:40.8px">3</div>
<div class="ln" style="top:80px;width:40.8px">4</div>
<div class="code" style="top:80px;left:67px"><span class="y">define</span><span class="k1">(</span><span class="s">'MAX_ATTEMPTS'</span>, <span class="n">3</span><span class="k1">)</span>;</div>
<div class="ln" style="top:99px;width:40.8px">5</div>
<div class="code" style="top:99px;left:67px"><span class="y">define</span><span class="k1">(</span><span class="s">'TIME_WINDOW'</span>, <span class="n">3600</span><span class="k1">)</span>;</div>
<div class="ln" style="top:118px;width:40.8px">6</div>
<div class="ln" style="top:137px;width:40.8px">7</div>
<div class="code" style="top:137px;left:67px"><span class="p">if</span> <span class="k1">(</span>!<span class="y">isset</span><span class="k2">(</span><span class="v">$_SESSION</span><span class="k3">[</span><span class="s">'form_attempts'</span><span class="k3">]</span><span class="k2">)</span><span class="k1">)</span> <span class="k1">{</span></div>
<div class="ln" style="top:156px;width:40.8px">8</div>
<div class="code" style="top:156px;left:67px">    <span class="v">$_SESSION</span><span class="k2">[</span><span class="s">'form_attempts'</span><span class="k2">]</span> = <span class="k2">[</span><span class="k2">]</span>;</div>
<div class="ln" style="top:175px;width:40.8px">9</div>
<div class="code" style="top:175px;left:67px"><span class="k1">}</span></div>
<div class="ln" style="top:194px;width:40.8px">10</div>
<div class="ln" style="top:213px;width:40.8px">11</div>
<div class="code" style="top:213px;left:67px"><span class="b">function</span> <span class="y">cleanOldAttempts</span><span class="k1">(</span><span class="k1">)</span> <span class="k1">{</span></div>
<div class="ln" style="top:232px;width:40.8px">12</div>
<div class="code" style="top:232px;left:67px">    <span class="v">$now</span> = <span class="y">time</span><span class="k2">(</span><span class="k2">)</span>;</div>
<div class="ln" style="top:251px;width:40.8px">13</div>
<div class="code" style="top:251px;left:67px">    <span class="v">$_SESSION</span><span class="k2">[</span><span class="s">'form_attempts'</span><span class="k2">]</span> = <span class="y">array_filter</span><span class="k2">(</span><span class="v">$_SESSION</span><span class="k3">[</span><span class="s">'form_attempts'</span><span class="k3">]</span>, <span class="b">function</span><span class="k3">(</span><span class="v">$timestamp</span><span class="k3">)</span> <span class="b">use</span> <span class="k3">(</span><span class="v">$now</span><span class="k3">)</span> <span class="k3">{</span></div>
<div class="ln la" style="top:270px;width:40.8px">14</div>
<div class="code" style="top:270px;left:67px">        <span class="p">return</span> <span class="k1">(</span><span class="v">$now</span> - <span class="v">$timestamp</span><span class="k1">)</span> &lt; <span class="w">TIME_WINDOW</span>;</div>
<div class="ln" style="top:289px;width:40.8px">15</div>
<div class="code" style="top:289px;left:67px">    <span class="k3">}</span><span class="k2">)</span>;</div>
<div class="ln" style="top:308px;width:40.8px">16</div>
<div class="code" style="top:308px;left:67px"><span class="k1">}</span></div>
<div class="ln" style="top:327px;width:40.8px">17</div>
<div class="ln" style="top:346px;width:40.8px">18</div>
<div class="code" style="top:346px;left:67px"><span class="b">function</span> <span class="y">canSubmitForm</span><span class="k1">(</span><span class="k1">)</span> <span class="k1">{</span></div>
<div class="ln" style="top:365px;width:40.8px">19</div>
<div class="code" style="top:365px;left:67px">    <span class="y">cleanOldAttempts</span><span class="k2">(</span><span class="k2">)</span>;</div>
<div class="ln" style="top:384px;width:40.8px">20</div>
<div class="code" style="top:384px;left:67px">    <span class="p">return</span> <span class="y">count</span><span class="k2">(</span><span class="v">$_SESSION</span><span class="k3">[</span><span class="s">'form_attempts'</span><span class="k3">]</span><span class="k2">)</span> &lt; <span class="w">MAX_ATTEMPTS</span>;</div>
<div class="ln" style="top:403px;width:40.8px">21</div>
<div class="code" style="top:403px;left:67px"><span class="k1">}</span></div>
<div class="ln" style="top:422px;width:40.8px">22</div>
<div class="ln" style="top:441px;width:40.8px">23</div>
<div class="code" style="top:441px;left:67px"><span class="p">if</span> <span class="k1">(</span><span class="v">$_SERVER</span><span class="k2">[</span><span class="s">'REQUEST_METHOD'</span><span class="k2">]</span> === <span class="s">'POST'</span><span class="k1">)</span> <span class="k1">{</span></div>
<div class="ln" style="top:460px;width:40.8px">24</div>
<div class="code" style="top:460px;left:67px">    <span class="v">$phone</span> = <span class="v">$_POST</span><span class="k2">[</span><span class="s">'phone'</span><span class="k2">]</span> ?? <span class="s">''</span>;</div>
<div class="ln" style="top:479px;width:40.8px">25</div>
<div class="code" style="top:479px;left:67px">    <span class="v">$name</span>  = <span class="v">$_POST</span><span class="k2">[</span><span class="s">'name'</span><span class="k2">]</span> ?? <span class="s">''</span>;</div>
<div class="ln" style="top:498px;width:40.8px">26</div>
<div class="code" style="top:498px;left:67px">    <span class="v">$message</span> = <span class="v">$_POST</span><span class="k2">[</span><span class="s">'message'</span><span class="k2">]</span> ?? <span class="s">''</span>;</div>
<div class="ln" style="top:517px;width:40.8px">27</div>
<div class="ln" style="top:536px;width:40.8px">28</div>
<div class="code" style="top:536px;left:67px">    <span class="v">$phone</span> = <span class="y">preg_replace</span><span class="k2">(</span><span class="s">'</span><span class="r">/\D/</span><span class="s">'</span>, <span class="s">''</span>, <span class="v">$phone</span><span class="k2">)</span>;</div>
<div class="ln" style="top:555px;width:40.8px">29</div>
<div class="code" style="top:555px;left:67px">    <span class="p">if</span> <span class="k2">(</span><span class="y">strlen</span><span class="k3">(</span><span class="v">$phone</span><span class="k3">)</span> &lt; <span class="n">10</span> || <span class="y">strlen</span><span class="k3">(</span><span class="v">$phone</span><span class="k3">)</span> &gt; <span class="n">15</span><span class="k2">)</span> <span class="k2">{</span></div>
<div class="ln" style="top:574px;width:40.8px">30</div>
<div class="code" style="top:574px;left:67px">        <span class="p">die</span><span class="k3">(</span><span class="s">'Invalid phone number.'</span><span class="k3">)</span>;</div>
<div class="ln" style="top:593px;width:40.8px">31</div>
<div class="code" style="top:593px;left:67px">    <span class="k2">}</span></div>
<div class="ln" style="top:612px;width:40.8px">32</div>
<div class="ln" style="top:631px;width:40.8px">33</div>
<div class="code" style="top:631px;left:67px">    <span class="p">if</span> <span class="k2">(</span>!<span class="y">canSubmitForm</span><span class="k3">(</span><span class="k3">)</span><span class="k2">)</span> <span class="k2">{</span></div>
<div class="ln" style="top:650px;width:40.8px">34</div>
<div class="code" style="top:650px;left:67px">        <span class="p">die</span><span class="k3">(</span><span class="s">'Too many submissions. Try later.'</span><span class="k3">)</span>;</div>
<div class="ln" style="top:669px;width:40.8px">35</div>
<div class="code" style="top:669px;left:67px">    <span class="k2">}</span></div>
<div class="ln" style="top:688px;width:40.8px">36</div>
<div class="ln" style="top:707px;width:40.8px">37</div>
<div class="code" style="top:707px;left:67px">    <span class="v">$_SESSION</span><span class="k2">[</span><span class="s">'form_attempts'</span><span class="k2">]</span><span class="k2">[</span><span class="k2">]</span> = <span class="y">time</span><span class="k2">(</span><span class="k2">)</span>;</div>
<div class="ln" style="top:726px;width:40.8px">38</div>
<div class="ln" style="top:745px;width:40.8px">39</div>
<div class="code" style="top:745px;left:67px">    <span class="y">echo</span> <span class="s">"Form submitted successfully!"</span>;</div>
<div class="ln" style="top:764px;width:40.8px">40</div>
<div class="code" style="top:764px;left:67px"><span class="k1">}</span></div>
<div class="ln" style="top:783px;width:40.8px">41</div>
<div class="code" style="top:783px;left:67px"><span class="b">?&gt;</span></div>
<div class="ln" style="top:802px;width:40.8px">42</div>
<div class="ln" style="top:821px;width:40.8px">43</div>
<div class="code" style="top:821px;left:67px"><span class="g">&lt;</span><span class="b">form</span> <span class="v">method</span>=<span class="s">"POST"</span><span class="g">&gt;</span></div>
<div class="ln" style="top:840px;width:40.8px">44</div>
<div class="code" style="top:840px;left:67px">    <span class="g">&lt;</span><span class="b">input</span> <span class="v">type</span>=<span class="s">"text"</span> <span class="v">name</span>=<span class="s">"name"</span> <span class="v">placeholder</span>=<span class="s">"Your Name"</span> <span class="v">required</span><span class="g">&gt;</span></div>
<div class="ln" style="top:859px;width:40.8px">45</div>
<div class="code" style="top:859px;left:67px">    <span class="g">&lt;</span><span class="b">input</span> <span class="v">type</span>=<span class="s">"text"</span> <span class="v">name</span>=<span class="s">"phone"</span> <span class="v">placeholder</span>=<span class="s">"Phone number"</span> <span class="v">required</span><span class="g">&gt;</span></div>
<div class="ln" style="top:878px;width:40.8px">46</div>
<div class="code" style="top:878px;left:67px">    <span class="g">&lt;</span><span class="b">textarea</span> <span class="v">name</span>=<span class="s">"message"</span> <span class="v">placeholder</span>=<span class="s">"Message"</span><span class="g">&gt;&lt;/</span><span class="b">textarea</span><span class="g">&gt;</span></div>
<div class="ln" style="top:897px;width:40.8px">47</div>
<div class="code" style="top:897px;left:67px">    <span class="g">&lt;</span><span class="b">button</span> <span class="v">type</span>=<span class="s">"submit"</span><span class="g">&gt;</span>Send<span class="g">&lt;/</span><span class="b">button</span><span class="g">&gt;</span></div>
<div class="ln" style="top:916px;width:40.8px">48</div>
<div class="code" style="top:916px;left:67px"><span class="g">&lt;/</span><span class="b">form</span><span class="g">&gt;</span></div>
<div class="ln" style="top:935px;width:40.8px">49</div>
</div>
<div id="status">
<svg style="left:-10.300px;top:3px" width="15" height="15" viewBox="0 0 15 15"><circle cx="7.500" cy="7.500" r="6" fill="none" stroke="#f0f0f0" stroke-width="1.100"/><path d="M4.800 4.800 L10.200 10.200 M10.200 4.800 L4.800 10.200" stroke="#f0f0f0" stroke-width="1.100"/></svg>
<svg style="left:9px;top:6px" width="12" height="9" viewBox="0 0 12 9"><path d="M0 1.800 L2.3 0 H3.7 V8.900 H2.3 V1.600 L0 3.100 Z M7 1.800 L9.3 0 H10.7 V8.900 H9.3 V1.600 L7 3.100 Z" fill="#f0f0f0"/></svg>
<svg style="left:25px;top:3px" width="14" height="13" viewBox="0 0 14 13"><path d="M7 1.200 L12.800 11.800 H1.200 Z" fill="none" stroke="#f0f0f0" stroke-width="1" stroke-linejoin="round"/><path d="M7 5 V8.600 M7 9.600 V10.600" stroke="#f0f0f0" stroke-width="1.100"/></svg>
<span style="left:42px;transform:scaleX(.9)">0</span>
<span style="left:1520px;transform:scaleX(.943)">Ln 8, Col 25</span>
<span style="left:1598px;transform:scaleX(.907)">Spaces: 4</span>
<span style="left:1663px;transform:scaleX(.921)">UTF-8</span>
<span style="left:1710px;transform:scaleX(.852)">CRLF</span>
<svg style="left:1752px;top:4px" width="15" height="13" viewBox="0 0 15 13"><path d="M5.600 .900 C4 .900 3.800 1.600 3.800 2.800 V4.400 C3.800 5.400 3.200 5.800 2.200 5.900 C3.200 6 3.800 6.400 3.800 7.400 V9.200 C3.800 10.400 4 11.100 5.600 11.100" fill="none" stroke="#f0f0f0" stroke-width="1.200"/><path d="M9.400 .900 C11 .900 11.200 1.600 11.200 2.800 V4.400 C11.200 5.400 11.800 5.800 12.800 5.900" fill="none" stroke="#f0f0f0" stroke-width="1.200"/><circle cx="10.700" cy="9.700" r="2.700" fill="#f0f0f0"/><path d="M9.600 8.600 L11.800 10.800 M11.800 8.600 L9.600 10.800" stroke="#000" stroke-width=".9"/></svg>
<span style="left:1773px;transform:scaleX(.855)">PHP</span>
<svg style="left:1809.500px;top:3px" width="15" height="14" viewBox="0 0 15 14"><ellipse cx="7.500" cy="9" rx="7.200" ry="4.400" fill="#f0f0f0"/><circle cx="4.700" cy="3.900" r="3.300" fill="#f0f0f0"/><circle cx="10.300" cy="3.900" r="3.300" fill="#f0f0f0"/><circle cx="4.700" cy="3.700" r="1.600" fill="#000"/><circle cx="10.300" cy="3.700" r="1.600" fill="#000"/><rect x="3.400" y="7" width="8.200" height="3.800" rx=".8" fill="#000"/><rect x="5.300" y="8" width="1.200" height="2.200" rx=".5" fill="#d8d8d8"/><rect x="8.500" y="8" width="1.200" height="2.200" rx=".5" fill="#d8d8d8"/></svg>
</div>
<div style="position:absolute;left:0;top:971px;width:285px;height:2px;background:#3e3e3e"></div>
<div style="position:absolute;left:288px;top:971px;width:48px;height:2px;background:#4c4c4c"></div>
<div style="position:absolute;left:336px;top:971px;width:1495px;height:2px;background:#222"></div>
</body></html>
